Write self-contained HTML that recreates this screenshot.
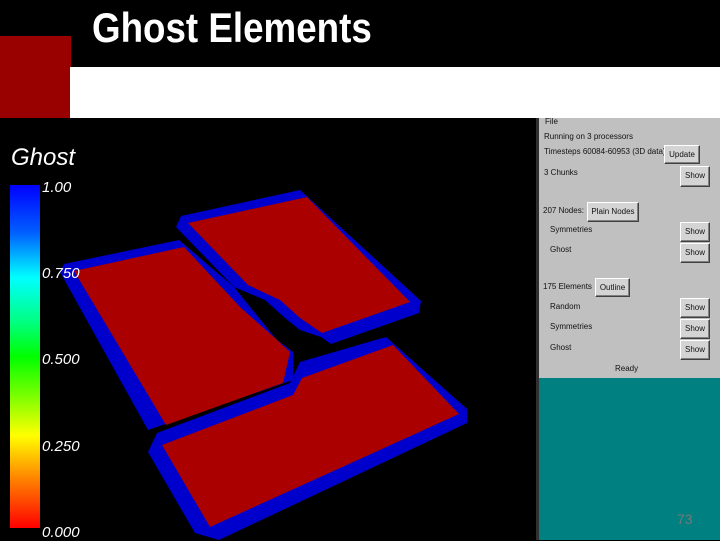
<!DOCTYPE html>
<html><head><style>
body{margin:0;width:720px;height:540px;background:#000;position:relative;overflow:hidden;font-family:"Liberation Sans",sans-serif}
.a{position:absolute}
.t{position:absolute;font-size:8px;color:#111;white-space:nowrap}
.b{position:absolute;background:#d4d4d4;border:1px solid;border-color:#fff #404040 #404040 #fff;box-shadow:inset -1px -1px #808080;font-size:8px;color:#111;text-align:center;box-sizing:border-box;line-height:18px}
.lab{position:absolute;left:42px;color:#fff;font-style:italic;font-size:15px;z-index:2}
</style></head><body>
<div class="a" style="left:0;top:36px;width:71px;height:82px;background:#990000"></div>
<div class="a" style="left:70px;top:67px;width:650px;height:51px;background:#fff"></div>
<div class="a" style="left:92px;top:4px;color:#fff;font-weight:bold;font-size:42px;transform:scaleX(0.875);transform-origin:left">Ghost Elements</div>
<div class="a" style="left:11px;top:144px;color:#fff;font-style:italic;font-size:24px">Ghost</div>
<div class="a" style="left:10px;top:185px;width:30px;height:343px;background:linear-gradient(#0000ff 0%,#0060ff 14%,#00ffff 27%,#00ff80 40%,#00ff00 50%,#80ff00 62%,#ffff00 73%,#ff8000 86%,#ff0000 100%)"></div>
<div class="lab" style="top:179px">1.00</div>
<div class="lab" style="top:265px">0.750</div>
<div class="lab" style="top:351px">0.500</div>
<div class="lab" style="top:438px">0.250</div>
<div class="lab" style="top:524px">0.000</div>
<svg class="a" style="left:0;top:0" width="536" height="540">
<polygon fill="#0000cc" points="64,264 179,240 234,287 276,339 293,352 293,380 148,430 60,272"/>
<polygon fill="#aa0000" points="74,271 184,247 241,308 276,339 290,352 283,383 166,425"/>
<polygon fill="#0000cc" points="181,216 300,190 421,301 419,313 331,344 321,337 300,330 285,318 265,300 234,287 176,227"/>
<polygon fill="#aa0000" points="188,223 307,197 410,302 322,333 300,318 280,300 248,285"/>
<polygon fill="#0000cc" points="148,452 157,433 290,383 300,362 386,337 467,409 467,423 219,540 195,533"/>
<polygon fill="#aa0000" points="162,445 293,395 302,378 393,345 459,414 210,527"/>
</svg>
<div class="a" style="left:536px;top:118px;width:3px;height:422px;background:#303030"></div>
<div class="a" style="left:539px;top:118px;width:181px;height:260px;background:#c0c0c0"></div>
<div class="a" style="left:539px;top:378px;width:181px;height:162px;background:#008080"></div>
<div class="t" style="left:545px;top:117px">File</div>
<div class="t" style="left:544px;top:132px">Running on 3 processors</div>
<div class="t" style="left:544px;top:147px">Timesteps 60084-60953 (3D data)</div>
<div class="b" style="left:664px;top:145px;width:36px;height:19px">Update</div>
<div class="t" style="left:544px;top:168px">3 Chunks</div>
<div class="b" style="left:680px;top:166px;width:30px;height:21px">Show</div>
<div class="t" style="left:543px;top:206px">207 Nodes:</div>
<div class="b" style="left:587px;top:202px;width:52px;height:20px">Plain Nodes</div>
<div class="t" style="left:550px;top:225px">Symmetries</div>
<div class="b" style="left:680px;top:222px;width:30px;height:20px">Show</div>
<div class="t" style="left:550px;top:245px">Ghost</div>
<div class="b" style="left:680px;top:243px;width:30px;height:20px">Show</div>
<div class="t" style="left:543px;top:282px">175 Elements</div>
<div class="b" style="left:595px;top:278px;width:35px;height:19px">Outline</div>
<div class="t" style="left:550px;top:302px">Random</div>
<div class="b" style="left:680px;top:298px;width:30px;height:20px">Show</div>
<div class="t" style="left:550px;top:322px">Symmetries</div>
<div class="b" style="left:680px;top:319px;width:30px;height:20px">Show</div>
<div class="t" style="left:550px;top:343px">Ghost</div>
<div class="b" style="left:680px;top:340px;width:30px;height:20px">Show</div>
<div class="t" style="left:615px;top:364px">Ready</div>
<div class="a" style="left:677px;top:511px;color:#777;font-size:14px">73</div>
</body></html>
